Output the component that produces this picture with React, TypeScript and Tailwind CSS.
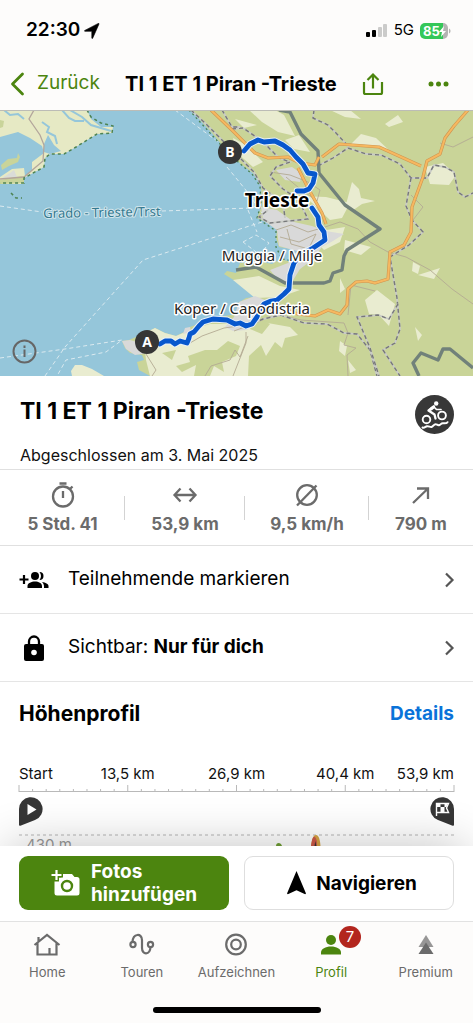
import type { ReactNode } from "react";

const route =
  "M160 234 L165 231 L171 231 L175 234 L180 231 L187 233 L189 228 L190 224 L194 222 L199 216 L203 212 L213 209 L227 210 L235 214 L240 213 L246 216 L252 214 L257 207 L260 199 L264 194 L271 191 L277 190 L284 184 L289 179 L290 165 L294 153 L300 145 L313 138 L325 130 L324 122 L319 115 L318 107 L312 98 M297 81 L304 81 L309 79 L313 73 L315 64 L308 63 L303 54 L296 47 L290 40 L283 35 L275 31 L264 32 L258 30 L250 34 L244 41";

const motorways = [
  "M211 0 L234 22 L255 43 L268 48 L288 47 L300 53 L315 55 L319 47 M322 47 L339 34 L379 37 L421 56",
  "M298 58 L308 78 L322 103 L326 114",
  "M468 0 L454 16 L445 28 L440 44 L427 51 L423 67 L412 97 L411 122 L404 135 L390 142 L388 169 L375 173 L367 171 L356 172 L348 179 L347 195 L340 204 L328 200 L315 206 L298 204 L286 200",
];

const railways = [
  "M191 0 L206 14 L222 30 L240 48 L254 62 L263 78 L283 93 L285 108",
  "M232 19 L243 18 L262 31 L279 48 L290 52 L276 57 L270 66 L283 79 L298 89 L308 109 L270 113 L259 107 L268 100",
  "M318 56 L333 48 L348 38 L366 44 L381 45 L400 54 L411 68 L427 68 L434 55 L445 57 L454 62 L458 82 L465 87 L473 83",
  "M314 0 L313 8 L328 15 L336 23 L349 37",
  "M411 68 L406 96 L412 110 L423 122 L409 135 L390 147 L397 188 L400 219 L395 233 L383 240 L400 266",
  "M247 216 L263 209 L281 205 L304 213 L327 214 L344 223 L357 224 L370 240 L377 266",
  "M398 194 L389 209 L378 205 L357 207 L370 238 L379 266",
  "M222 0 L232 17 L240 17",
];

const borders = [
  "M279 0 L290 2 L301 24 L318 41 L319 63 L345 95 L380 119 L347 140 L344 146 L342 160 L333 163 L330 171 L324 173 L285 173 L256 157 L236 160",
  "M419 266 L413 253 L421 243 L438 250 L443 239 L450 239 L473 258",
];

const fields =
  "M249 0 L275 0 L284 5 L295 26 L278 22 L262 12 Z M285 30 L299 25 L310 42 L294 39 Z M235 9 L257 15 L244 18 Z M233 28 L246 35 L263 52 L253 57 L236 42 Z M300 86 L326 87 L350 93 L342 108 L330 110 L310 91 Z M352 72 L359 79 L361 88 L375 91 L362 94 L352 101 L347 96 L344 102 Z M385 14 L398 5 L403 12 L389 17 Z M425 57 L443 53 L456 65 L449 75 L430 74 Z M361 24 L376 28 L393 44 L381 37 L349 36 Z M365 190 L377 180 L395 194 L389 216 L378 204 L369 204 Z M345 130 L371 137 L361 145 L344 140 Z M233 170 L259 166 L280 176 L300 180 L280 187 L255 188 Z M245 218 L262 212 L290 217 L298 225 L285 228 L282 238 L275 232 L266 246 L261 235 L250 245 L233 262 Z M418 165 L440 158 L434 169 Z M413 152 L420 156 L418 164 L412 161 Z M415 217 L422 225 L418 231 Z M340 231 L347 236 L345 246 L339 241 Z M308 123 L345 117 L340 132 L324 140 Z M340 168 L345 179 L340 183 Z M330 0 L350 0 L361 9 L345 7 Z M348 250 L356 260 L350 263 Z";

const woods =
  "M162 243 L176 240 L172 250 Z M188 246 L205 240 L217 240 L228 231 L240 236 L236 246 L222 252 L224 262 L214 256 L210 266 H194 L196 255 L182 262 L176 256 L190 252 Z M255 206 L270 214 L262 224 L250 219 Z";

const smallRoads =
  "M270 62 L290 65 L308 72 L320 80 L317 91 L299 78 L286 67 M276 120 L291 115 L308 122 L325 117 L340 112 L358 119 L370 132 L388 142 L406 147 L430 160 L452 179 L473 194 M280 127 L299 132 L316 124 L307 142 M287 119 L291 134 L305 138 M234 221 L258 212 L276 204 L301 210 L344 213 L348 223 L344 235 L356 238 L347 245 L348 266 M233 266 L246 233 L246 222 M411 85 L423 97 L413 110 M440 33 L453 37 L473 27 M348 205 L351 175 L375 181 M146 244 L156 260 L152 266 M190 233 L202 226 L224 218 L246 215 M205 266 L211 256 L230 250 L235 240 L240 247 L248 226";

function TourMap() {
  return (
    <svg
      viewBox="0 1 473 265"
      preserveAspectRatio="xMidYMid slice"
      className="block h-[265px] w-full"
      role="img"
      aria-label="Karte"
    >
      <rect width="473" height="266" fill="#95c6da" />

      {/* lagoon of Grado */}
      <path
        d="M0 0 H87 L91 9 L101 17 L113 17 L112 23 L97 24 L76 37 L64 44 L50 44 L45 48 L44 57 L24 68 V74 H0 V67 L12 59 L24 58 L25 66 L32 60 V52 L44 43 L42 36 L30 28 L18 22 L0 27 Z"
        fill="#e6e9c4"
      />
      <path d="M44 34 L48 25 L54 35 L61 41 L50 44 L44 42 Z" fill="#95c6da" />
      <path d="M0 10 L4 11 L3 17 L0 18 Z M1 55 L8 49 L17 48 L18 43 L20 47 L18 52 L9 56 L2 60 Z M16 67 L24 66 V73 L0 74 V70 Z" fill="#c9d49a" />
      <path d="M10 63 L14 60 L17 67 L2 68 Z" fill="#dadcd8" />
      <g fill="none" stroke="#95c6da" strokeWidth="2">
        <path d="M4 0 L10 5 L18 4 L24 9 M42 12 L49 17 L47 22 L55 26 L57 34 M62 0 L69 8 L75 11 L84 11 M70 0 L82 7 L91 15 L111 21" />
      </g>
      <path d="M34 0 L29 9 L40 25 L44 35 L43 51 L24 67 L0 69" fill="none" stroke="#b3a69c" strokeWidth="1.3" />
      <path
        d="M87 0 L91 7 L101 13 L113 16 L112 23 L97 24 L76 37 L64 44 L50 44 L45 48 L44 57 L24 68 V73 H0 M11 83 L16 88 L22 88"
        fill="none"
        stroke="#4d8353"
        strokeWidth="1.5"
        strokeDasharray="3 3"
      />

      {/* mainland */}
      <path
        d="M191 0 H473 V266 H150 L139 260 L137 252 L144 250 L142 245 L130 243 L125 238 L122 231 L129 230 L143 224 L155 218 L165 223 L176 226 L184 222 L190 217 L203 212 L215 207 L232 205 L240 199 L238 193 L246 188 L254 187 L250 181 L240 174 L224 164 L227 161 L236 163 L240 153 L258 151 L272 154 L284 147 L293 151 L298 140 L279 137 L276 128 L277 120 L268 113 L257 108 L262 95 L261 75 L253 63 L242 55 L228 42 L211 22 Z"
        fill="#c9d498"
      />
      <path d="M72 266 L71 261 L75 255 L82 255 L92 259 L104 266 Z" fill="#e9ecd0" />
      <path
        d="M143 224 L155 218 L165 223 L176 226 L190 220 L210 214 L240 214 L250 226 L248 266 H150 L146 250 Z"
        fill="#e9ecd0"
      />
      <path d={fields} fill="#e9ecd0" />
      <path d={woods} fill="#c9d498" />
      <path
        d="M276 60 L292 57 L302 64 L300 72 L285 70 Z M261 97 L277 100 L294 112 L312 116 L326 121 L344 124 L333 131 L322 137 L312 150 L300 159 L292 172 L280 172 L270 160 L288 153 L297 141 L279 136 L277 120 L263 110 Z M239 192 L255 186 L265 190 L258 204 L247 220 L233 221 L225 217 L234 207 Z M122 231 L130 230 L150 236 L154 242 L135 245 L126 239 Z M185 218 L190 217 L191 222 L183 224 Z"
        fill="#d9d9d9"
      />
      <path d="M280 139 L296 141 L288 151 L279 149 Z" fill="#95c6da" />
      <path d={smallRoads} fill="none" stroke="#b3aa93" strokeWidth="0.9" />

      {/* ferry lines */}
      <g fill="none" stroke="#dbeaf0" strokeWidth="1" strokeDasharray="4 3">
        <path d="M0 96 L42 102 M162 101 L252 98 L262 93" />
        <path d="M175 0 L221 34 M227 57 L245 79 L262 103" />
        <path d="M45 266 L65 237 L143 150 L262 112" />
        <path d="M0 248 L65 239 L122 230 L106 242 L66 250 L57 266" />
        <path d="M243 132 L256 125 L269 133 L260 145 Z M248 100 L257 122" />
      </g>
      <path
        d="M189 0 L211 24 L230 45 L252 64 L260 76 L261 94 L257 108 L276 121 L276 137 L282 149 L293 151"
        fill="none"
        stroke="#4d8353"
        strokeWidth="1.3"
        strokeDasharray="2 3"
      />

      {railways.map((d) => (
        <g key={d} fill="none">
          <path d={d} stroke="#c9cbc6" strokeWidth="1.8" />
          <path d={d} stroke="#77787a" strokeWidth="1.4" strokeDasharray="4 3" />
        </g>
      ))}
      {borders.map((d) => (
        <path key={d} d={d} fill="none" stroke="#71817a" strokeWidth="3.4" strokeLinejoin="round" />
      ))}
      {motorways.map((d) => (
        <g key={d} fill="none" strokeLinejoin="round">
          <path d={d} stroke="#cf9550" strokeWidth="3.2" />
          <path d={d} stroke="#f6b860" strokeWidth="2" />
        </g>
      ))}

      <g fill="none" strokeLinejoin="round" strokeLinecap="round">
        <path d={route} stroke="#e8f0f8" strokeWidth="6.8" />
        <path d={route} stroke="#0757cd" strokeWidth="4.8" />
      </g>

      <g
        fontFamily="'Noto Sans', sans-serif"
        textAnchor="middle"
        stroke="#ffffff"
        strokeWidth="3"
        strokeLinejoin="round"
        paintOrder="stroke"
      >
        <text x="102" y="107" fontSize="13" fill="#34798f" stroke="#d3e6ed" strokeWidth="2" transform="rotate(-1 102 107)">
          Grado - Trieste/Trst
        </text>
        <text x="277" y="97" fontSize="19" fontWeight="700" fill="#000000">Trieste</text>
        <text x="272" y="151" fontSize="15" fill="#222222">Muggia / Milje</text>
        <text x="242" y="204" fontSize="15" fill="#222222">Koper / Capodistria</text>
      </g>

      <g fontFamily="'Noto Sans', sans-serif" fontWeight="700" fontSize="14" textAnchor="middle">
        <circle cx="230" cy="42" r="12" fill="#363636" />
        <text x="230" y="47" fill="#ffffff">B</text>
        <circle cx="147" cy="232" r="12" fill="#363636" />
        <text x="147" y="237" fill="#ffffff">A</text>
      </g>
    </svg>
  );
}

function StatusBar() {
  return (
    <div className="flex h-[57px] items-center justify-between pt-1 pr-[22px] pl-[26px]">
      <div className="flex items-center gap-1">
        <span className="text-[19px] font-semibold">22:30</span>
        <svg width="16" height="16" viewBox="0 0 16 16" aria-hidden="true">
          <path d="M15 1 8.700 15.200c-.2.500-.9.400-.9-.2V8.300H1c-.6 0-.7-.7-.2-.9L14.300.4c.6-.2.900.1.700.6Z" stroke="#000000" strokeWidth="0.600" />
        </svg>
      </div>
      <div className="flex items-center gap-[6px]">
        <svg width="22" height="15" viewBox="0 0 22 15" aria-hidden="true">
          <rect x="0" y="9" width="4" height="5" rx="1" />
          <rect x="6" y="7" width="4" height="7" rx="1" />
          <rect x="12" y="4" width="4" height="10" rx="1" fill="#cbcbca" />
          <rect x="17" y="1" width="4" height="13" rx="1" fill="#cbcbca" />
        </svg>
        <span className="text-[15px]">5G</span>
        <svg width="31" height="16" viewBox="0 0 31 16" role="img" aria-label="85 %">
          <path d="M5 0h18v16H5a5 5 0 0 1-5-5V5a5 5 0 0 1 5-5Z" fill="#35c759" />
          <path d="M23 0a5 5 0 0 1 5 5v6a5 5 0 0 1-5 5Z" fill="#b4b4b3" />
          <path d="M29 5.500c2 .8 2 4.200 0 5Z" fill="#b4b4b3" />
          <text x="3" y="13" fontSize="13" fontWeight="700" fill="#ffffff">85</text>
          <path d="m24 3-5 6h3l-1 5 5-6h-3l1-5Z" fill="#ffffff" />
        </svg>
      </div>
    </div>
  );
}

function NavBar() {
  return (
    <header className="flex h-[53px] items-center pr-6 pl-[10px] text-[#4c850f]">
      <button className="flex items-center gap-3 text-[19px]">
        <svg width="15" height="24" viewBox="0 0 15 24" fill="none" stroke="currentColor" strokeWidth="2.8" strokeLinecap="round" strokeLinejoin="round" aria-hidden="true">
          <path d="M12.500 2 2.500 12l10 10" />
        </svg>
        Zurück
      </button>
      <h1 className="flex-1 text-center text-[20px] font-bold whitespace-nowrap text-black">
        TI 1 ET 1 Piran -Trieste
      </h1>
      <button aria-label="Teilen" className="mr-[44px]">
        <svg width="22" height="24" viewBox="0 0 22 24" fill="none" stroke="currentColor" strokeWidth="2.200" aria-hidden="true">
          <path d="M2 10v10.500c0 .8.500 1.500 1.500 1.500h15c1 0 1.500-.7 1.500-1.500V10M11 16.500V2.500M5.500 8 11 2.500 16.500 8" />
        </svg>
      </button>
      <button aria-label="Mehr">
        <svg width="21" height="6" viewBox="0 0 21 6" fill="currentColor" aria-hidden="true">
          <circle cx="3" cy="3" r="2.500" />
          <circle cx="10.500" cy="3" r="2.500" />
          <circle cx="18" cy="3" r="2.500" />
        </svg>
      </button>
    </header>
  );
}

function BikeBadge() {
  return (
    <svg width="39" height="39" viewBox="0 0 39 39" fill="none" stroke="#ffffff" strokeLinecap="round" strokeLinejoin="round" role="img" aria-label="Mountainbike">
      <circle cx="19.500" cy="19.500" r="19.500" fill="#383838" stroke="none" />
      <circle cx="11.500" cy="24.500" r="3.800" strokeWidth="1.900" />
      <circle cx="27" cy="20.500" r="3.900" strokeWidth="1.900" />
      <circle cx="21.200" cy="8.500" r="2.200" fill="#ffffff" stroke="none" />
      <path d="M19 11.500 13.500 15.500 19.500 19.500 20.500 23.500" strokeWidth="2.300" />
      <path d="M18.500 11.500 21.500 14.500H26" strokeWidth="1.700" />
      <path d="M16 14 18.500 12" strokeWidth="3" />
      <path d="M7.500 32.500c2 .8 3-1 4.500-1.300 2-.4 3 1.300 4.500.8 2-.6 2.300-2.800 4-2.800s2 1.500 4 .8c1.500-.5 1.500-2 3.500-1.800 2 .2 3.500.5 4.500-1" strokeWidth="2" />
    </svg>
  );
}

const stats: { value: string; label: string; icon: ReactNode }[] = [
  {
    value: "5 Std. 41",
    label: "Dauer",
    icon: (
      <>
        <circle cx="14" cy="15.500" r="10" />
        <path d="M14 10v7M10.500 2.500h7M20.500 8.500l3-3" />
      </>
    ),
  },
  {
    value: "53,9 km",
    label: "Distanz",
    icon: <path d="M3.500 14h21M9.500 7.500 3.500 14l6 6.500M18.500 7.500l6 6.500-6 6.500" />,
  },
  {
    value: "9,5 km/h",
    label: "Durchschnitt",
    icon: (
      <>
        <circle cx="14" cy="14" r="9.800" />
        <path d="M4 24.500 23.500 4.500" />
      </>
    ),
  },
  {
    value: "790 m",
    label: "Aufstieg",
    icon: <path d="M6 22 21 7.500M10 7.500h11V18" />,
  },
];

function Stats() {
  return (
    <ul className="grid h-[77px] grid-cols-[125fr_120fr_124fr_104fr] items-center border-y border-[#e0e0e0] text-[#6b6b6b]">
      {stats.map((stat) => (
        <li key={stat.value} className="group relative flex flex-col items-center">
          <svg width="28" height="28" viewBox="0 0 28 28" fill="none" stroke="currentColor" strokeWidth="2.300" role="img" aria-label={stat.label}>
            {stat.icon}
          </svg>
          <span className="mt-1 text-[17px] leading-[22px] font-bold">{stat.value}</span>
          <span className="absolute top-[15px] right-0 h-6 w-px bg-[#d3d3d3] group-last:hidden" />
        </li>
      ))}
    </ul>
  );
}

function Row({ icon, children }: { icon: ReactNode; children: ReactNode }) {
  return (
    <button className="flex h-[68px] w-full items-center border-b border-[#e5e5e5] pr-[18px] pl-[19px] text-left text-[19px]">
      <span className="flex w-[49px] shrink-0">{icon}</span>
      <span className="flex-1">{children}</span>
      <svg width="11" height="16" viewBox="0 0 11 16" fill="none" stroke="#555555" strokeWidth="2.200" aria-hidden="true">
        <path d="m2 1.500 6.500 6.500L2 14.500" />
      </svg>
    </button>
  );
}

const ticks = Array.from({ length: 33 }, (_, i) => i);

function ElevationProfile() {
  return (
    <section className="flex-1 overflow-hidden px-[19px]">
      <div className="flex h-16 items-center justify-between">
        <h2 className="text-[21px] font-bold">Höhenprofil</h2>
        <a href="#details" className="text-[19px] font-bold text-[#0a73d9]">
          Details
        </a>
      </div>
      <div className="mt-[18px] grid grid-cols-8 text-[15px] leading-5 whitespace-nowrap text-[#111111]">
        <span>Start</span>
        <span className="col-span-2 text-center">13,5 km</span>
        <span className="col-span-2 text-center">26,9 km</span>
        <span className="col-span-2 text-center">40,4 km</span>
        <span className="flex justify-end">53,9 km</span>
      </div>
      <svg className="block h-2 w-full overflow-visible" stroke="#b9b9b9" aria-hidden="true">
        <line x1="0" y1="7.500" x2="100%" y2="7.500" />
        {ticks.map((i) => (
          <line key={i} x1={`${i * 3.125}%`} x2={`${i * 3.125}%`} y1={i % 8 === 0 ? 1 : 5} y2="8" />
        ))}
      </svg>
      <div className="flex justify-between pt-[5px]">
        <svg width="24" height="29" viewBox="0 0 24 29" role="img" aria-label="Start">
          <path d="M0 28V12A11.800 11.800 0 1 1 16 23L2 28.500C.8 29 0 28.800 0 28Z" fill="#363636" />
          <path d="m8.500 7 9 5.500-9 5.500Z" fill="#ffffff" />
        </svg>
        <svg width="24" height="29" viewBox="0 0 24 29" role="img" aria-label="Ziel">
          <path d="M24 28V12A11.800 11.800 0 1 0 8 23L22 28.500c1.200.5 2 .3 2-.5Z" fill="#363636" />
          <path d="M6.500 19V6.500h12L16.500 11l2 4.500h-12" fill="none" stroke="#ffffff" strokeWidth="1.400" />
          <path d="M6.500 6.500h4v3.500h-4ZM14.500 6.500h3l-1 3.500h-2ZM10.500 10h4v5h-4Z" fill="#ffffff" />
        </svg>
      </div>
      <div className="relative mt-2 h-3 pl-[7px]">
        <svg className="absolute top-0 left-0 h-[2px] w-full" aria-hidden="true">
          <line x1="0" y1="1" x2="100%" y2="1" stroke="#cfcfcf" strokeWidth="1.500" strokeDasharray="3 3" />
        </svg>
        <span className="block pt-[1px] text-[15px] leading-5 text-[#999999]">430 m</span>
        <svg className="absolute right-[128px] bottom-0" width="56" height="12" viewBox="0 0 56 12" aria-hidden="true">
          <path d="M6 12c0-4 5-4 6 0Z" fill="#6f9f35" />
          <path d="M41 12c1-7 2-11 5-11s4 5 4.500 11Z" fill="#d7a545" />
          <path d="M41 12c1-7 2-10 4-9 2 2 2 5 2 9Z" fill="#cf5a49" />
          <path d="m44.500 12 .8-5 1 5Z" fill="#333333" />
        </svg>
      </div>
    </section>
  );
}

function Actions() {
  return (
    <div className="relative z-10 grid grid-cols-2 gap-[15px] border-b border-[#e2e2e2] bg-white px-[19px] pt-[10px] pb-[11px] text-[19px] leading-[23px] font-bold shadow-[0_-8px_48px_-8px_rgba(0,0,0,0.24)]">
      <button className="flex h-[54px] items-center gap-[11px] rounded-[9px] bg-[#4c850f] pl-[32px] text-left text-white">
        <svg className="shrink-0" width="29" height="28" viewBox="0 0 29 28" aria-hidden="true">
          <path d="M12 5h9l2.500 3H26a2.500 2.500 0 0 1 2.500 2.500V24a2.500 2.500 0 0 1-2.500 2.500H6A2.500 2.500 0 0 1 3.500 24V12.500H8v-4h4Z" fill="#ffffff" />
          <path d="M5.500 1v10M.5 6h10" stroke="#4c850f" strokeWidth="5" />
          <path d="M5.500 1v10M.5 6h10" stroke="#ffffff" strokeWidth="2.200" />
          <circle cx="16" cy="17" r="5" fill="#ffffff" stroke="#4c850f" strokeWidth="2.400" />
        </svg>
        <span>
          Fotos
          <br />
          hinzufügen
        </span>
      </button>
      <button className="flex h-[54px] items-center justify-center gap-[10px] rounded-[9px] border border-[#dedede] pr-[6px] pl-[12px]">
        <svg width="19" height="24" viewBox="0 0 19 24" aria-hidden="true">
          <path d="M9.500 0 19 22.500l-.8.8-8.700-4-8.700 4-.8-.8Z" />
        </svg>
        Navigieren
      </button>
    </div>
  );
}

const tabs: { label: string; icon: ReactNode; active?: boolean; badge?: string }[] = [
  {
    label: "Home",
    icon: (
      <path d="M1.500 14 14 4l12.500 10M4.500 12v11.500h19V12M16.500 23.500V17M5.500 10V6" />
    ),
  },
  {
    label: "Touren",
    icon: (
      <>
        <circle cx="5" cy="13.500" r="2.600" />
        <circle cx="22.500" cy="13.500" r="2.600" />
        <path d="M4.500 11C5 2 14 2 14 9v8c0 7 8 7.500 8.500-1" />
      </>
    ),
  },
  {
    label: "Aufzeichnen",
    icon: (
      <>
        <circle cx="14" cy="13.500" r="9.800" />
        <circle cx="14" cy="13.500" r="4.800" />
      </>
    ),
  },
  {
    label: "Profil",
    active: true,
    badge: "7",
    icon: (
      <g fill="currentColor" stroke="none">
        <circle cx="14" cy="9" r="5" />
        <path d="M4 23.500v-2c0-3.500 4.500-6 10-6s10 2.500 10 6v2Z" />
      </g>
    ),
  },
  {
    label: "Premium",
    icon: (
      <g fill="currentColor" stroke="none">
        <path d="m14 4 7.500 12h-15Z" opacity="0.7" />
        <path d="m14 11.500 7.500 11.500h-15Z" />
      </g>
    ),
  },
];

function TabBar() {
  return (
    <nav className="relative z-10 bg-[#fdfcfb]">
      <div className="grid h-[78px] grid-cols-5">
        {tabs.map((tab) => (
          <button
            key={tab.label}
            className={`flex flex-col items-center pt-[9px] text-[13px] leading-4 ${
              tab.active ? "text-[#4c850f]" : "text-[#6b6b6b]"
            }`}
          >
            <span className="relative">
              <svg width="28" height="28" viewBox="0 0 28 28" fill="none" stroke="currentColor" strokeWidth="2.200" aria-hidden="true">
                {tab.icon}
              </svg>
              {tab.badge && (
                <span className="absolute -top-[5px] left-[22px] flex h-[22px] w-[22px] items-center justify-center rounded-full bg-[#b3261e] text-[15px] text-white">
                  {tab.badge}
                </span>
              )}
            </span>
            <span className="mt-[5px]">{tab.label}</span>
          </button>
        ))}
      </div>
      <div className="flex h-[23px] justify-center pt-[7px]">
        <div className="h-[6px] w-[168px] rounded-full bg-black" />
      </div>
    </nav>
  );
}

export default function App() {
  return (
    <div className="flex min-h-screen flex-col bg-white font-['Inter',sans-serif] text-black">
      <div className="bg-[#fdfcfb]">
        <StatusBar />
        <NavBar />
      </div>
      <div className="relative border-t border-[#bcbcb6]">
        <TourMap />
        <button aria-label="Info" className="absolute bottom-3 left-3">
          <svg width="25" height="25" viewBox="0 0 25 25" fill="none" stroke="#666666" strokeWidth="2" aria-hidden="true">
            <circle cx="12.500" cy="12.500" r="11" />
            <path d="M12.500 10.500V18M12.500 6.500V9" />
          </svg>
        </button>
      </div>
      <div className="flex h-[93px] items-start justify-between pt-[19px] pr-[19px] pl-5">
        <div>
          <h2 className="text-[23px] leading-8 font-bold">TI 1 ET 1 Piran -Trieste</h2>
          <p className="mt-4 text-[16px] leading-6 text-[#111111]">Abgeschlossen am 3. Mai 2025</p>
        </div>
        <BikeBadge />
      </div>
      <Stats />
      <Row
        icon={
          <svg width="30" height="18" viewBox="0 0 30 18" aria-hidden="true">
            <path d="M5 4v9M.5 8.500h9" stroke="#000000" strokeWidth="2.200" />
            <circle cx="16" cy="5" r="4" />
            <path d="M20.500 1a4 4 0 1 1 0 8c2-2.500 2-5.500 0-8ZM8.500 17v-2c0-3 4-4.500 7.500-4.500s7 1.500 7 4.500v2ZM23 11c3.500.5 6.500 2 6.500 4v2H25c.3-2.500-.3-4.500-2-6Z" />
          </svg>
        }
      >
        Teilnehmende markieren
      </Row>
      <Row
        icon={
          <svg className="ml-[5px]" width="20" height="26" viewBox="0 0 20 26" aria-hidden="true">
            <path d="M5 10V6.500a5 5 0 0 1 10 0V10" fill="none" stroke="#000000" strokeWidth="2.300" />
            <path d="M2 9h16a2 2 0 0 1 2 2v13a2 2 0 0 1-2 2H2a2 2 0 0 1-2-2V11a2 2 0 0 1 2-2Z" />
            <circle cx="10" cy="17.500" r="2.800" fill="#ffffff" />
          </svg>
        }
      >
        Sichtbar: <span className="font-bold">Nur für dich</span>
      </Row>
      <ElevationProfile />
      <Actions />
      <TabBar />
    </div>
  );
}
